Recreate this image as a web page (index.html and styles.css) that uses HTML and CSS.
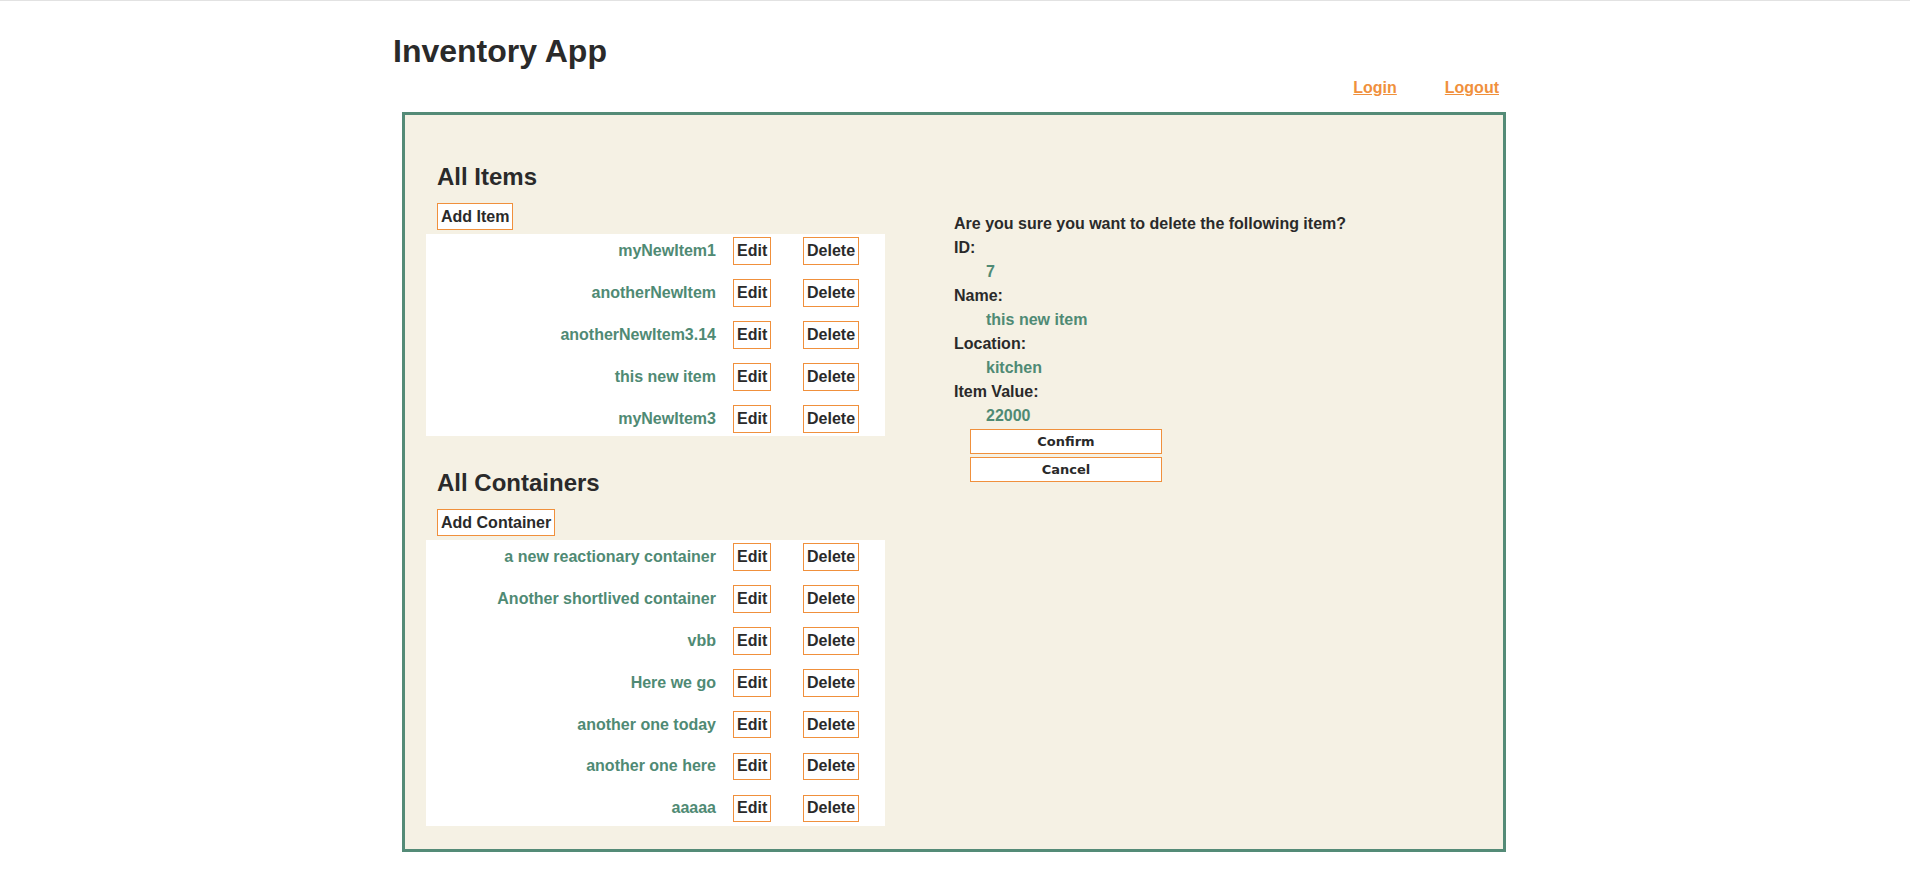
FILE: index.html
```html
<!DOCTYPE html>
<html lang="en">
<head>
<meta charset="utf-8">
<title>Inventory App</title>
<link rel="stylesheet" href="styles.css">
</head>
<body>
<div class="page">
  <header class="topbar">
    <h1 class="title">Inventory App</h1>
    <nav class="nav">
      <a href="#" class="nav-link">Login</a>
      <a href="#" class="nav-link">Logout</a>
    </nav>
  </header>
  <main class="board">
    <section class="lists">
      <div class="group">
        <h2 class="group-title">All Items</h2>
        <button class="btn add-btn">Add Item</button>
        <div class="rows">
          <span class="name">myNewItem1</span><span class="cell"><button class="btn">Edit</button></span><span class="cell"><button class="btn">Delete</button></span>
          <span class="name">anotherNewItem</span><span class="cell"><button class="btn">Edit</button></span><span class="cell"><button class="btn">Delete</button></span>
          <span class="name">anotherNewItem3.14</span><span class="cell"><button class="btn">Edit</button></span><span class="cell"><button class="btn">Delete</button></span>
          <span class="name">this new item</span><span class="cell"><button class="btn">Edit</button></span><span class="cell"><button class="btn">Delete</button></span>
          <span class="name">myNewItem3</span><span class="cell"><button class="btn">Edit</button></span><span class="cell"><button class="btn">Delete</button></span>
        </div>
      </div>
      <div class="group group-second">
        <h2 class="group-title">All Containers</h2>
        <button class="btn add-btn">Add Container</button>
        <div class="rows">
          <span class="name">a new reactionary container</span><span class="cell"><button class="btn">Edit</button></span><span class="cell"><button class="btn">Delete</button></span>
          <span class="name">Another shortlived container</span><span class="cell"><button class="btn">Edit</button></span><span class="cell"><button class="btn">Delete</button></span>
          <span class="name">vbb</span><span class="cell"><button class="btn">Edit</button></span><span class="cell"><button class="btn">Delete</button></span>
          <span class="name">Here we go</span><span class="cell"><button class="btn">Edit</button></span><span class="cell"><button class="btn">Delete</button></span>
          <span class="name">another one today</span><span class="cell"><button class="btn">Edit</button></span><span class="cell"><button class="btn">Delete</button></span>
          <span class="name">another one here</span><span class="cell"><button class="btn">Edit</button></span><span class="cell"><button class="btn">Delete</button></span>
          <span class="name">aaaaa</span><span class="cell"><button class="btn">Edit</button></span><span class="cell"><button class="btn">Delete</button></span>
        </div>
      </div>
    </section>
    <section class="confirm">
      <p class="question">Are you sure you want to delete the following item?</p>
      <dl class="details">
        <dt class="label">ID:</dt>
        <dd class="value">7</dd>
        <dt class="label">Name:</dt>
        <dd class="value">this new item</dd>
        <dt class="label">Location:</dt>
        <dd class="value">kitchen</dd>
        <dt class="label">Item Value:</dt>
        <dd class="value">22000</dd>
      </dl>
      <div class="actions">
        <button class="wide-btn">Confirm</button>
        <button class="wide-btn">Cancel</button>
      </div>
    </section>
  </main>
</div>
</body>
</html>
```

FILE: styles.css
```css
html, body {
  margin: 0;
  padding: 0;
  background: #ffffff;
}

body {
  border-top: 1px solid #e2e2e2;
  font-family: "Liberation Sans", Arial, sans-serif;
  font-size: 16px;
  color: #2a2a2a;
}

.page {
  width: 1124px;
  margin: 0 auto;
}

.topbar {
  display: flex;
  flex-direction: column;
}

.title {
  margin: 32px 0 0 0;
  font-size: 32px;
  font-weight: bold;
  line-height: normal;
  color: #2a2a2a;
}

.nav {
  display: flex;
  justify-content: flex-end;
  gap: 48px;
  padding-right: 18px;
  margin-top: 8.5px;
}

.nav-link {
  color: #f0903c;
  font-weight: bold;
  text-decoration: underline;
  line-height: normal;
}

.board {
  box-sizing: border-box;
  width: 1104px;
  margin: 15.5px 0 0 9px;
  border: 3px solid #548b77;
  background: #f5f1e4;
  display: grid;
  grid-template-columns: 1fr 1fr;
  padding: 48px 0 23.5px 0;
}

.lists {
  padding-left: 21px;
}

.group {
  display: flex;
  flex-direction: column;
  align-items: flex-start;
}

.group-second {
  margin-top: 33px;
}

.group-title {
  margin: 0 0 12px 11px;
  font-size: 24px;
  font-weight: bold;
  line-height: normal;
  color: #2a2a2a;
}

.btn {
  box-sizing: border-box;
  height: 27.7px;
  font-family: "Liberation Sans", Arial, sans-serif;
  font-size: 16px;
  font-weight: bold;
  line-height: 18px;
  color: #2a2a2a;
  background: #ffffff;
  border: 1px solid #f0903c;
  border-radius: 0;
  padding: 0 3px;
  margin: 0;
  cursor: pointer;
}

.add-btn {
  height: 27.3px;
  margin: 0 0 3.8px 11px;
}

.rows {
  width: 459px;
  background: #ffffff;
  display: grid;
  grid-template-columns: 307px 70px 1fr;
  row-gap: 14.2px;
  align-items: center;
  padding: 3.3px 0;
}

.name {
  text-align: right;
  padding-right: 17px;
  font-weight: bold;
  color: #4f8a74;
}

.cell {
  display: flex;
}

.confirm {
  padding-top: 48.5px;
}

.question {
  margin: 0;
  font-weight: bold;
  line-height: 24px;
}

.details {
  margin: 0;
  line-height: 24px;
  font-weight: bold;
}

.label {
  margin: 0;
}

.value {
  margin: 0 0 0 32px;
  color: #4f8a74;
}

.actions {
  display: flex;
  flex-direction: column;
  align-items: flex-start;
  gap: 3px;
  margin: 1.5px 0 0 16px;
}

.wide-btn {
  box-sizing: border-box;
  width: 192px;
  height: 25px;
  font-family: "DejaVu Sans", sans-serif;
  font-size: 13px;
  font-weight: bold;
  color: #2a2a2a;
  background: #ffffff;
  border: 1px solid #f0903c;
  border-radius: 0;
  padding: 0;
  margin: 0;
  cursor: pointer;
}
```
